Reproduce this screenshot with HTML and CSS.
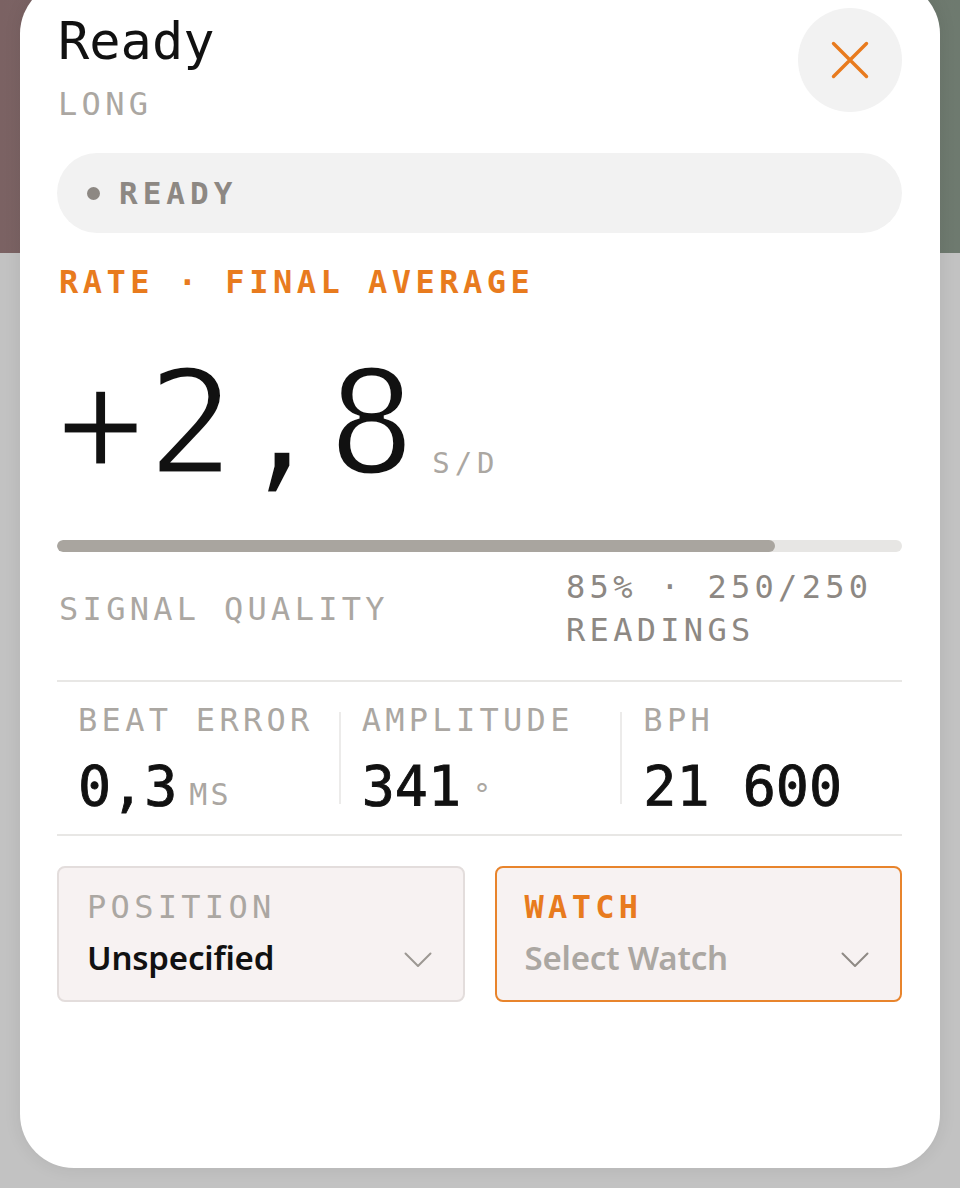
FILE: index.html
```html
<!DOCTYPE html>
<html lang="en">
<head>
    <meta charset="UTF-8">
    <meta name="viewport" content="width=device-width, initial-scale=1.0">
    <title>Timing Result</title>
    <link rel="stylesheet" href="styles.css">
</head>
<body>

<div class="sheet">
    <header class="sheet-head">
        <div class="title-block">
            <h1 class="title">Ready</h1>
            <div class="subtitle">LONG</div>
        </div>
        <button class="close-btn" aria-label="Close">
            <svg width="38" height="38" viewBox="0 0 38 38">
                <path d="M2.5 2.5 L35.5 35.5 M35.5 2.5 L2.5 35.5" stroke="#e87b1e" stroke-width="3.4" stroke-linecap="round" fill="none"/>
            </svg>
        </button>
    </header>

    <div class="status-pill"><span class="dot"></span>READY</div>

    <div class="section-label">RATE · FINAL AVERAGE</div>
    <div class="rate">
        <span class="rate-value">+2,8</span>
        <span class="rate-unit">S/D</span>
    </div>

    <div class="quality-bar"><div class="quality-fill" style="width: 85%;"></div></div>
    <div class="quality-row">
        <span class="quality-label">SIGNAL QUALITY</span>
        <span class="quality-info">85% · 250/250 READINGS</span>
    </div>

    <div class="stats">
        <div class="stat">
            <div class="stat-label">BEAT ERROR</div>
            <div class="stat-value">0,3<span class="stat-unit">MS</span></div>
        </div>
        <div class="stat">
            <div class="stat-label">AMPLITUDE</div>
            <div class="stat-value">341<span class="stat-unit">°</span></div>
        </div>
        <div class="stat">
            <div class="stat-label">BPH</div>
            <div class="stat-value">21 600</div>
        </div>
    </div>

    <div class="selectors">
        <div class="select-box">
            <div class="select-label">POSITION</div>
            <div class="select-row">
                <span class="select-value">Unspecified</span>
                <svg class="chevron" width="28" height="16" viewBox="0 0 28 16">
                    <path d="M1.5 1.5 L14 14 L26.5 1.5" stroke="#9d9893" stroke-width="2" fill="none" stroke-linecap="round" stroke-linejoin="round"/>
                </svg>
            </div>
        </div>
        <div class="select-box active">
            <div class="select-label">WATCH</div>
            <div class="select-row">
                <span class="select-value placeholder">Select Watch</span>
                <svg class="chevron" width="28" height="16" viewBox="0 0 28 16">
                    <path d="M1.5 1.5 L14 14 L26.5 1.5" stroke="#8f8a85" stroke-width="2" fill="none" stroke-linecap="round" stroke-linejoin="round"/>
                </svg>
            </div>
        </div>
    </div>
</div>

</body>
</html>
```

FILE: styles.css
```css
body {
    margin: 0;
    height: 1188px;
    overflow: hidden;
    font-family: 'DejaVu Sans Mono', monospace;
    background: linear-gradient(90deg, #7b6263, #75706b 50%, #6e7a6f) top / 100% 253px no-repeat, #c2c2c2;
}

.sheet {
    margin: -20px 20px 0;
    height: 1188px;
    box-sizing: border-box;
    padding: 28px 38px 0 37px;
    background-color: #fff;
    border-radius: 54px;
    box-shadow: 0 0 18px rgba(0, 0, 0, 0.08);
}

/* шапка */
.sheet-head {
    display: flex;
    justify-content: space-between;
    align-items: flex-start;
}

.title-block {
    margin-top: 7px;
    padding-left: 1px;
}

.title {
    margin: 0;
    font-size: 52px;
    font-weight: normal;
    line-height: 52px;
    color: #111;
}

.subtitle {
    margin-top: 21px;
    font-size: 32px;
    line-height: 32px;
    letter-spacing: 4.3px;
    color: #aba7a2;
}

.close-btn {
    width: 104px;
    height: 104px;
    border: none;
    border-radius: 50%;
    background-color: #f2f2f2;
    display: flex;
    align-items: center;
    justify-content: center;
    padding: 0;
    cursor: pointer;
}

.status-pill {
    margin-top: 33px;
    height: 80px;
    border-radius: 40px;
    background-color: #f2f2f2;
    display: flex;
    align-items: center;
    padding-left: 30px;
    font-size: 31px;
    font-weight: bold;
    letter-spacing: 5px;
    color: #8d8883;
}

.status-pill .dot {
    width: 13px;
    height: 13px;
    border-radius: 50%;
    background-color: #8d8883;
    margin-right: 19px;
}

/* показатель хода */
.section-label {
    margin-top: 33px;
    padding-left: 2px;
    font-size: 32px;
    line-height: 32px;
    font-weight: bold;
    letter-spacing: 4.5px;
    color: #e87b1e;
}

.rate {
    margin-top: 52px;
    display: flex;
    align-items: baseline;
    line-height: 145px;
}

.rate-value {
    font-size: 145px;
    letter-spacing: 3px;
    color: #111;
    -webkit-text-stroke: 3px #fff;
}

.rate-unit {
    margin-left: 14px;
    font-size: 29px;
    letter-spacing: 5px;
    color: #aba7a2;
}

.quality-bar {
    margin-top: 4px;
    height: 12px;
    border-radius: 6px;
    background-color: #e7e6e4;
    overflow: hidden;
}

.quality-fill {
    height: 100%;
    border-radius: 6px;
    background-color: #a9a59f;
}

.quality-row {
    margin-top: 14px;
    display: flex;
    justify-content: space-between;
    align-items: center;
    font-size: 32px;
    line-height: 43px;
    letter-spacing: 4.3px;
    padding-bottom: 28px;
    border-bottom: 2px solid #e8e7e5;
}

.quality-label {
    padding-left: 2px;
    color: #aba7a2;
}

.quality-info {
    width: 336px;
    color: #8d8883;
}

/* три значения */
.stats {
    display: grid;
    grid-template-columns: repeat(3, 1fr);
    padding: 30px 0;
    border-bottom: 2px solid #e8e7e5;
}

.stat {
    padding-left: 21px;
}

.stat + .stat {
    border-left: 2px solid #ecebea;
}

.stat-label {
    margin-top: -8px;
    font-size: 32px;
    line-height: 32px;
    letter-spacing: 4.3px;
    color: #aba7a2;
}

.stat-value {
    margin-top: 23px;
    margin-bottom: -18px;
    font-size: 55px;
    line-height: 54px;
    color: #111;
    -webkit-text-stroke: 0.9px #111;
}

.stat-unit {
    margin-left: 12px;
    font-size: 30px;
    letter-spacing: 3px;
    color: #aba7a2;
    -webkit-text-stroke: 0;
}

/* выбор позиции и часов */
.selectors {
    margin-top: 30px;
    display: grid;
    grid-template-columns: 1fr 1fr;
    gap: 30px;
}

.select-box {
    height: 136px;
    box-sizing: border-box;
    padding: 23px 31px 0 28px;
    border: 2px solid #e3dddc;
    border-radius: 8px;
    background-color: #f7f2f2;
}

.select-box.active {
    border-color: #e8842c;
}

.select-label {
    font-size: 32px;
    line-height: 32px;
    letter-spacing: 4.3px;
    color: #aba7a2;
}

.select-box.active .select-label {
    font-weight: bold;
    color: #e87b1e;
}

.select-row {
    margin-top: 13px;
    display: flex;
    justify-content: space-between;
    align-items: center;
}

.select-value {
    font-family: 'Noto Sans', 'Open Sans', sans-serif;
    font-size: 33px;
    font-weight: 600;
    line-height: 44px;
    letter-spacing: -0.2px;
    color: #111;
}

.select-value.placeholder {
    color: #aba7a2;
}

.chevron {
    margin-top: 4px;
}
```
